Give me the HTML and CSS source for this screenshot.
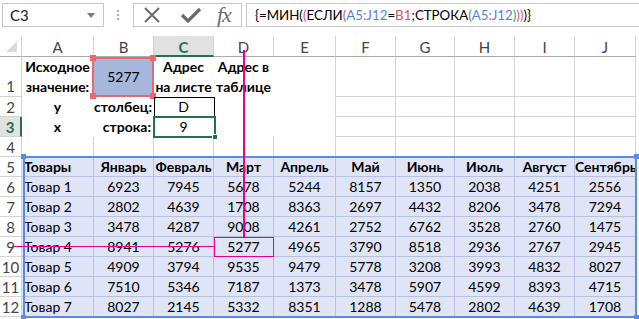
FILE: index.html
```html
<!DOCTYPE html>
<html lang="ru">
<head>
    <meta charset="UTF-8">
    <title>МИН ЕСЛИ СТРОКА</title>
    <link rel="stylesheet" href="styles.css">
</head>
<body>
    <div class="toolbar">
        <div class="name-box">C3<span class="caret"></span></div>
        <div class="grip"><span></span><span></span><span></span></div>
        <div class="fx-buttons">
            <svg class="icon-x" width="18" height="18" viewBox="0 0 18 18">
                <path d="M2 2 L16 16 M16 2 L2 16" stroke="#6b6b6b" stroke-width="2" fill="none"/>
            </svg>
            <svg class="icon-ok" width="22" height="16" viewBox="0 0 22 16">
                <path d="M2 8 L8 14 L20 2" stroke="#6b6b6b" stroke-width="3.2" fill="none"/>
            </svg>
            <span class="icon-fx">fx</span>
        </div>
        <div class="formula">{=МИН(<span class="p1">(</span>ЕСЛИ<span class="p2">(</span><span class="ref-a">A5:J12</span>=<span class="ref-b">B1</span>;СТРОКА<span class="p3">(</span><span class="ref-a">A5:J12</span><span class="p3">)</span><span class="p2">)</span><span class="p1">)</span>)}</div>
    </div>

    <div class="sheet">
        <!-- column headers -->
        <div class="corner"></div>
        <div class="ch">A</div>
        <div class="ch">B</div>
        <div class="ch on">C</div>
        <div class="ch">D</div>
        <div class="ch">E</div>
        <div class="ch">F</div>
        <div class="ch">G</div>
        <div class="ch">H</div>
        <div class="ch">I</div>
        <div class="ch">J</div>

        <!-- row 1 -->
        <div class="rh tall">1</div>
        <div class="blank b two">Исходное<br>значение:</div>
        <div class="blank key">5277</div>
        <div class="blank b two">Адрес<br>на листе</div>
        <div class="blank b two">Адрес в<br>таблице</div>
        <div class="blank edge"></div>
        <div></div><div></div><div></div><div></div><div></div>

        <!-- row 2 -->
        <div class="rh">2</div>
        <div class="blank b">y</div>
        <div class="blank b r">столбец:</div>
        <div class="blank">D</div>
        <div class="blank"></div>
        <div class="blank edge"></div>
        <div></div><div></div><div></div><div></div><div></div>

        <!-- row 3 -->
        <div class="rh on">3</div>
        <div class="blank b">x</div>
        <div class="blank b r">строка:</div>
        <div class="blank">9</div>
        <div class="blank"></div>
        <div class="blank edge"></div>
        <div></div><div></div><div></div><div></div><div></div>

        <!-- row 4 -->
        <div class="rh">4</div>
        <div></div><div></div><div></div><div></div><div></div>
        <div></div><div></div><div></div><div></div><div></div>

        <!-- table A5:J12 -->
        <div class="rh">5</div>
        <div class="t b l">Товары</div>
        <div class="t b">Январь</div>
        <div class="t b">Февраль</div>
        <div class="t b">Март</div>
        <div class="t b">Апрель</div>
        <div class="t b">Май</div>
        <div class="t b">Июнь</div>
        <div class="t b">Июль</div>
        <div class="t b">Август</div>
        <div class="t b">Сентябрь</div>

        <div class="rh">6</div>
        <div class="t l">Товар 1</div>
        <div class="t">6923</div><div class="t">7945</div><div class="t">5678</div><div class="t">5244</div><div class="t">8157</div>
        <div class="t">1350</div><div class="t">2038</div><div class="t">4251</div><div class="t">2556</div>

        <div class="rh">7</div>
        <div class="t l">Товар 2</div>
        <div class="t">2802</div><div class="t">4639</div><div class="t">1708</div><div class="t">8363</div><div class="t">2697</div>
        <div class="t">4432</div><div class="t">8206</div><div class="t">3478</div><div class="t">7294</div>

        <div class="rh">8</div>
        <div class="t l">Товар 3</div>
        <div class="t">3478</div><div class="t">4287</div><div class="t">9008</div><div class="t">4261</div><div class="t">2752</div>
        <div class="t">6762</div><div class="t">3528</div><div class="t">2760</div><div class="t">1475</div>

        <div class="rh">9</div>
        <div class="t l">Товар 4</div>
        <div class="t">8941</div><div class="t">5276</div><div class="t">5277</div><div class="t">4965</div><div class="t">3790</div>
        <div class="t">8518</div><div class="t">2936</div><div class="t">2767</div><div class="t">2945</div>

        <div class="rh">10</div>
        <div class="t l">Товар 5</div>
        <div class="t">4909</div><div class="t">3794</div><div class="t">9535</div><div class="t">9479</div><div class="t">5778</div>
        <div class="t">3208</div><div class="t">3993</div><div class="t">4832</div><div class="t">8027</div>

        <div class="rh">11</div>
        <div class="t l">Товар 6</div>
        <div class="t">7510</div><div class="t">5346</div><div class="t">7187</div><div class="t">1373</div><div class="t">3478</div>
        <div class="t">5907</div><div class="t">4599</div><div class="t">8393</div><div class="t">4715</div>

        <div class="rh">12</div>
        <div class="t l">Товар 7</div>
        <div class="t">8027</div><div class="t">2145</div><div class="t">5332</div><div class="t">8351</div><div class="t">1288</div>
        <div class="t">5478</div><div class="t">2802</div><div class="t">4639</div><div class="t">1708</div>

        <!-- selections and traces drawn over the cells -->
        <span class="sel-key"><i class="h tl"></i><i class="h tr"></i><i class="h bl"></i><i class="h br"></i></span>
        <span class="sel-c2"></span>
        <span class="sel-c3"><i class="fill"></i></span>
        <span class="range"><i class="h tl"></i><i class="h tr"></i><i class="h bl"></i><i class="h br"></i></span>
        <span class="trace-v"></span>
        <span class="trace-h"></span>
        <span class="trace-box"></span>
    </div>
</body>
</html>
```

FILE: styles.css
```css
* {
    box-sizing: border-box;
}

body {
    margin: 0;
    width: 639px;
    height: 319px;
    overflow: hidden;
    background: #fff;
    color: #000;
    font-family: "Lato", "Liberation Sans", sans-serif;
}

/* formula bar */

.toolbar {
    display: flex;
    align-items: flex-start;
    height: 36px;
    padding-top: 3px;
}

.name-box {
    display: flex;
    align-items: center;
    justify-content: space-between;
    width: 102px;
    height: 24px;
    margin-left: 2px;
    padding: 0 8px 0 7px;
    border: 1px solid #c6c6c6;
    font-size: 15px;
    color: #222;
}

.caret {
    width: 0;
    height: 0;
    border-left: 4px solid transparent;
    border-right: 4px solid transparent;
    border-top: 5px solid #7a7a7a;
}

.grip {
    display: flex;
    flex-direction: column;
    gap: 2px;
    width: 2px;
    margin: 7px 14px 0 13px;
}

.grip span {
    width: 2px;
    height: 2px;
    background: #b0b0b0;
}

.fx-buttons {
    display: flex;
    align-items: center;
    width: 109px;
    height: 24px;
    border: 1px solid #c6c6c6;
}

.icon-x {
    margin-left: 9px;
}

.icon-ok {
    margin-left: 19px;
}

.icon-fx {
    margin-left: 15px;
    font-family: "Liberation Serif", serif;
    font-style: italic;
    font-size: 22px;
    line-height: 22px;
    color: #6b6b6b;
    letter-spacing: -1px;
}

.formula {
    flex: 1;
    height: 24px;
    margin-left: 4px;
    padding-left: 8px;
    border: 1px solid #c6c6c6;
    border-right: none;
    font-size: 13.3px;
    line-height: 22px;
    white-space: nowrap;
}

.p1 { color: #e0507a; }
.p2 { color: #9a5cc6; }
.p3 { color: #35a153; }
.ref-a { color: #5b7fd8; }
.ref-b { color: #e0525a; }

/* sheet grid */

.sheet {
    position: relative;
    display: grid;
    grid-template-columns: 22px 72px 60px 60px 60px 62px 60px 59px 60px 60px 61px;
    grid-template-rows: 21px 40px repeat(11, 20px);
    font-size: 14px;
}

.sheet > div {
    border-right: 1px solid #d4d4d4;
    border-bottom: 1px solid #d4d4d4;
    line-height: 19px;
    text-align: center;
    white-space: nowrap;
}

.corner {
    position: relative;
    border-bottom-color: #ababab !important;
}

.corner::after {
    content: "";
    position: absolute;
    right: 4px;
    bottom: 4px;
    border-left: 11px solid transparent;
    border-bottom: 11px solid #dadada;
}

.ch {
    padding-top: 2px;
    color: #444;
    font-size: 15px;
    border-bottom-color: #ababab !important;
}

.ch.on {
    background: #e1e1e1;
    color: #217346;
    font-weight: bold;
    border-bottom: 2px solid #217346 !important;
}

.rh {
    color: #444;
    font-size: 15px;
    line-height: 20px !important;
}

.rh.tall {
    padding-top: 19px;
}

.rh.on {
    background: #e1e1e1;
    color: #217346;
    font-weight: bold;
    border-right: 2px solid #217346 !important;
}

.sheet > .blank {
    border-color: transparent;
}

.sheet > .blank.edge {
    border-right-color: #d4d4d4;
}

.two {
    line-height: 20px !important;
}

.key {
    display: flex;
    align-items: center;
    justify-content: center;
    background: #a6b7dd;
}

.b {
    font-weight: bold;
}

.r {
    text-align: right !important;
    padding-right: 2px;
}

.l {
    text-align: left !important;
    padding-left: 2px;
}

.sheet > .t {
    background: #dfe5f7;
    border-color: #b9c1e0;
}

/* overlays: grid lines must be given explicitly for absolute items */

.sheet > span {
    position: absolute;
}

.sheet i {
    position: absolute;
    display: block;
}

.sel-key {
    grid-column: 3 / 4;
    grid-row: 2 / 3;
    top: 0;
    right: 0;
    bottom: 0;
    left: -2px;
    border: 2px solid #e8686c;
}

.sel-key .h {
    width: 6px;
    height: 6px;
    background: #e8686c;
}

.h.tl { top: -4px; left: -4px; }
.h.tr { top: -4px; right: -4px; }
.h.bl { bottom: -4px; left: -4px; }
.h.br { bottom: -4px; right: -4px; }

.sel-c2 {
    grid-column: 4 / 5;
    grid-row: 3 / 4;
    top: 0;
    right: -1px;
    bottom: 0;
    left: 0;
    border: 1px solid #000;
}

.sel-c3 {
    grid-column: 4 / 5;
    grid-row: 4 / 5;
    top: -1px;
    right: -2px;
    bottom: -1px;
    left: -1px;
    border: 2px solid #217346;
}

.fill {
    right: -4px;
    bottom: -4px;
    width: 6px;
    height: 6px;
    background: #217346;
    border: 1px solid #fff;
}

.range {
    grid-column: 2 / 12;
    grid-row: 6 / 14;
    top: -1px;
    right: -1px;
    bottom: -1px;
    left: 1px;
    border: 2px solid #5b8be3;
}

.range .h {
    width: 5px;
    height: 5px;
    background: #5b8be3;
}

.trace-v {
    grid-column: 5 / 6;
    grid-row: 1 / 10;
    top: 14px;
    bottom: 0;
    left: 29px;
    width: 2px;
    background: #ec008c;
}

.trace-h {
    grid-column: 1 / 5;
    grid-row: 10 / 11;
    top: 9px;
    left: 14px;
    right: 0;
    height: 1px;
    background: #ec008c;
}

.trace-box {
    grid-column: 5 / 6;
    grid-row: 10 / 11;
    top: 0;
    right: 0;
    bottom: 0;
    left: 0;
    border: 1px solid #ec008c;
}
```
